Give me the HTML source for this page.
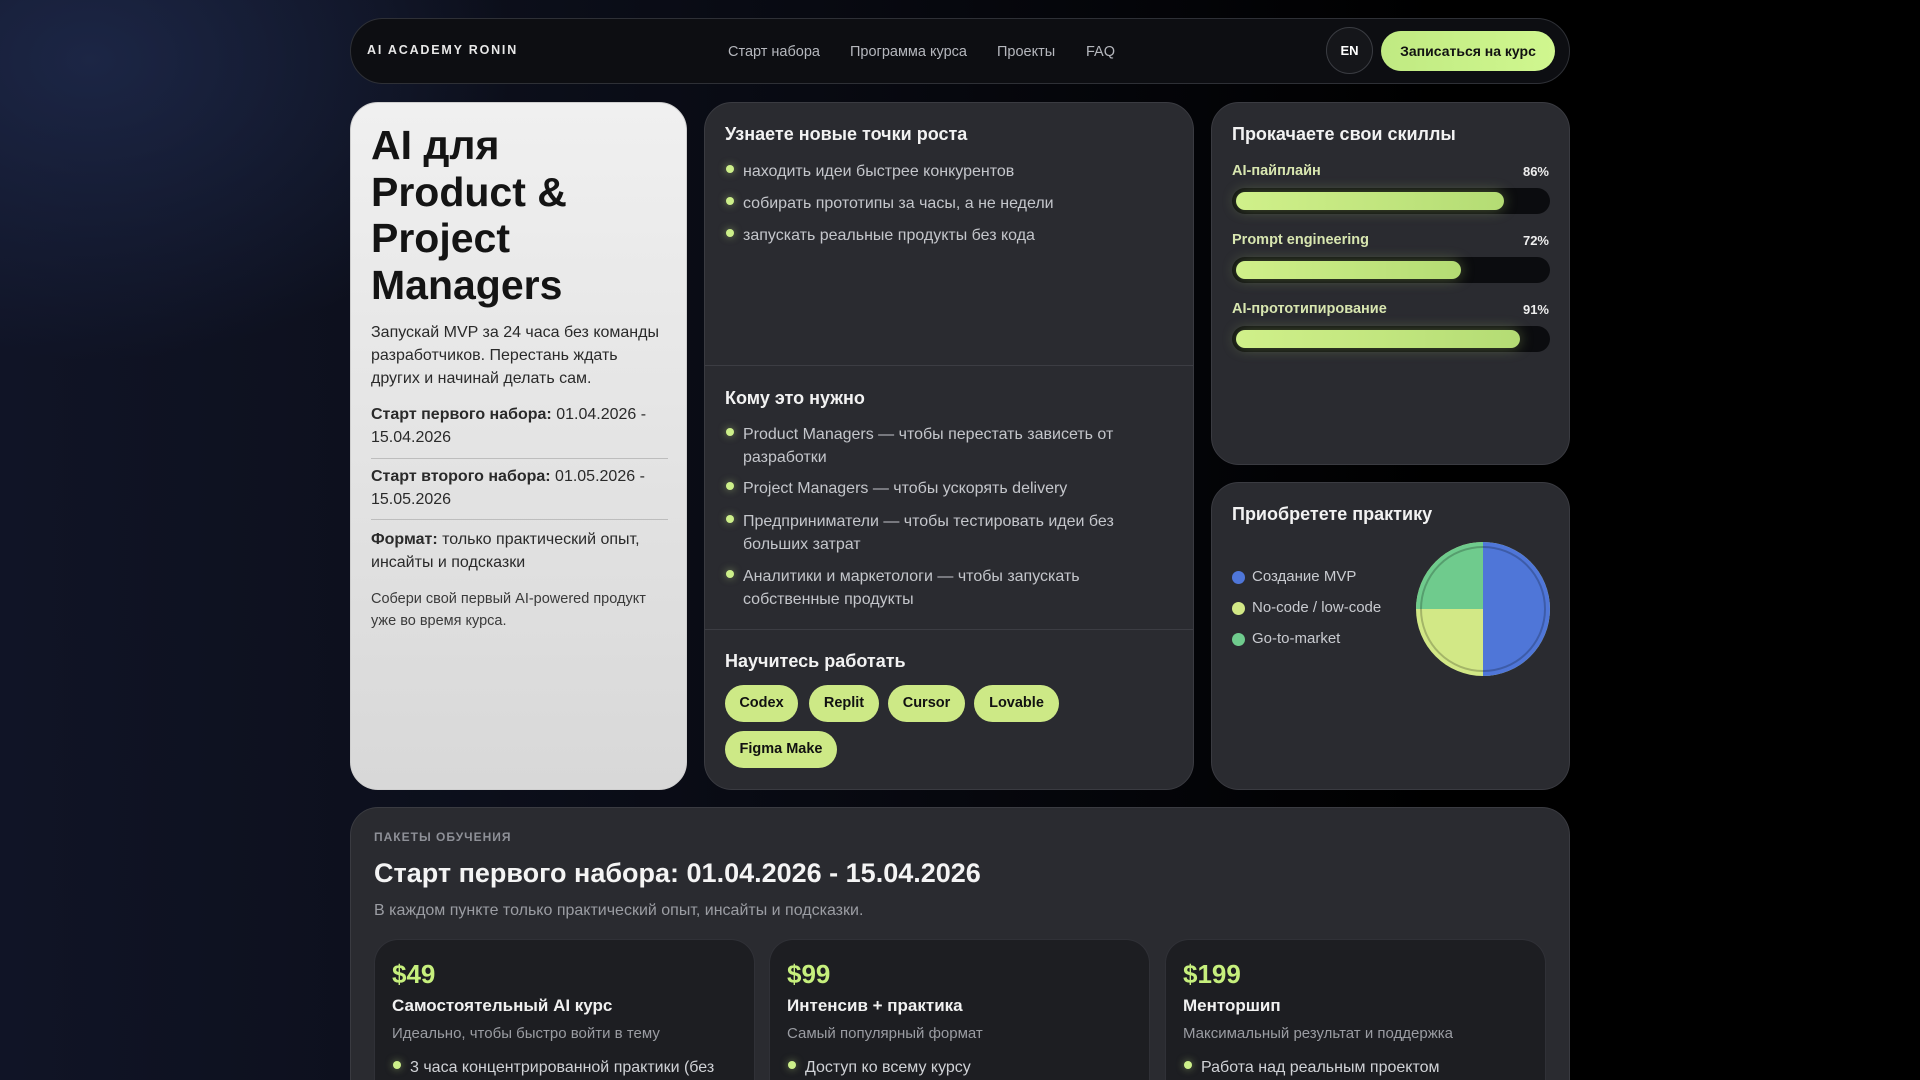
<!DOCTYPE html>
<html><head><meta charset="utf-8">
<style>
*{box-sizing:border-box;margin:0;padding:0}
html,body{width:1920px;height:1080px;overflow:hidden}
body{font-family:"Liberation Sans",sans-serif;position:relative;
background:radial-gradient(ellipse 420px 300px at 90px 60px,rgba(32,44,80,.75),rgba(32,44,80,0) 100%),linear-gradient(90deg,#101426 0%,#0c0f1b 25%,#05060b 55%,#000 75%,#000 100%);}
.abs{position:absolute}
.nav{left:350px;top:18px;width:1220px;height:66px;border-radius:33px;background:#0d0e12;border:1px solid #2e3036}
.logo{left:16px;top:24px;color:#e8e8e8;font-size:12.5px;font-weight:bold;letter-spacing:1.8px}
.nl{top:25px;color:#b5b7bd;font-size:14.5px}
.en{left:975px;top:8px;width:47px;height:47px;border-radius:50%;border:1px solid #3a3c42;background:#15161a;color:#fff;font-size:13px;font-weight:bold;text-align:center;line-height:45px}
.cta{left:1030px;top:12px;width:174px;height:40px;border-radius:20px;background:linear-gradient(90deg,#c0ea82,#d0f78f);color:#111;font-size:14px;font-weight:bold;text-align:center;line-height:40px}
.card{border-radius:28px;background:#2a2b30;border:1px solid #3a3b41;overflow:hidden}
.lcard{left:350px;top:102px;width:337px;height:688px;border-radius:28px;background:linear-gradient(180deg,#f0f0f0,#d8d8d8);border:1px solid #cfcfcf;color:#1b1b1b}
.lcard .p{position:absolute;left:20px;width:292px}
h1{font-size:41px;line-height:46.5px;font-weight:bold;color:#141414}
.t16{font-size:16px;line-height:23px;color:#2a2a2a}
.hr{position:absolute;left:20px;width:297px;height:1px;background:#bdbdbd}
h3{position:absolute;left:20px;font-size:18px;font-weight:bold;color:#f2f2f2}
.li{position:absolute;left:38px;font-size:16px;line-height:23px;color:#c4c6cb;width:400px}
.li:before{content:"";position:absolute;left:-17px;top:5px;width:8px;height:8px;border-radius:50%;background:#cdf08a;box-shadow:0 0 8px rgba(205,240,138,.5)}
.div{position:absolute;left:0;width:100%;height:1px;background:#3c3d43}
.chip{position:absolute;height:37px;border-radius:19px;background:#cde986;color:#111;font-size:14.5px;font-weight:bold;line-height:37px;text-align:center}
.lab{position:absolute;left:20px;font-size:14.5px;font-weight:bold;color:#d8e6b0}
.pct{position:absolute;right:20px;font-size:13px;font-weight:bold;color:#eee}
.bar{position:absolute;left:20px;width:318px;height:26px;border-radius:13px;background:#0b0c0f}
.bar i{position:absolute;left:4px;top:4px;height:18px;border-radius:9px;background:linear-gradient(90deg,#d0f08a,#b4dc74);box-shadow:0 0 14px rgba(200,235,130,.35)}
.leg{position:absolute;left:40px;font-size:15px;color:#c9cbd0}
.leg:before{content:"";position:absolute;left:-20px;top:3px;width:13px;height:13px;border-radius:50%;background:var(--c)}
.pk{position:absolute;top:131px;width:381px;height:150px;border-radius:24px 24px 0 0;background:#1d1e22;border:1px solid #303137;border-bottom:none}
.pk .pr{position:absolute;left:17px;top:19px;font-size:26px;font-weight:bold;color:#c6ef7d}
.pk .tt{position:absolute;left:17px;top:56px;font-size:17px;font-weight:bold;color:#f1f1f1}
.pk .ds{position:absolute;left:17px;top:85px;font-size:15px;color:#9a9ca2}
.pk .li{left:35px;top:116px;color:#d0d2d6}
</style></head><body>
<div class="abs nav">
 <div class="abs logo">AI ACADEMY RONIN</div>
 <div class="abs nl" style="left:377px">Старт набора</div>
 <div class="abs nl" style="left:499px">Программа курса</div>
 <div class="abs nl" style="left:646px">Проекты</div>
 <div class="abs nl" style="left:735px">FAQ</div>
 <div class="abs en">EN</div>
 <div class="abs cta">Записаться на курс</div>
</div>

<div class="abs lcard">
 <div class="p" style="top:19px"><h1>AI для<br>Product &amp;<br>Project<br>Managers</h1></div>
 <div class="p t16" style="top:218px">Запускай MVP за 24 часа без команды разработчиков. Перестань ждать других и начинай делать сам.</div>
 <div class="p t16" style="top:300px"><b>Старт первого набора:</b> 01.04.2026 - 15.04.2026</div>
 <div class="hr" style="top:355px"></div>
 <div class="p t16" style="top:362px"><b>Старт второго набора:</b> 01.05.2026 - 15.05.2026</div>
 <div class="hr" style="top:416px"></div>
 <div class="p t16" style="top:425px"><b>Формат:</b> только практический опыт, инсайты и подсказки</div>
 <div class="p" style="top:485px;font-size:14.5px;line-height:22px;color:#3a3a3a">Собери свой первый AI-powered продукт уже во время курса.</div>
</div>

<div class="abs card" style="left:704px;top:102px;width:490px;height:688px">
 <h3 style="top:21px">Узнаете новые точки роста</h3>
 <div class="li" style="top:57px">находить идеи быстрее конкурентов</div>
 <div class="li" style="top:89px">собирать прототипы за часы, а не недели</div>
 <div class="li" style="top:121px">запускать реальные продукты без кода</div>
 <div class="div" style="top:262px"></div>
 <h3 style="top:285px">Кому это нужно</h3>
 <div class="li" style="top:320px">Product Managers — чтобы перестать зависеть от разработки</div>
 <div class="li" style="top:374px">Project Managers — чтобы ускорять delivery</div>
 <div class="li" style="top:407px">Предприниматели — чтобы тестировать идеи без больших затрат</div>
 <div class="li" style="top:462px">Аналитики и маркетологи — чтобы запускать собственные продукты</div>
 <div class="div" style="top:526px"></div>
 <h3 style="top:548px">Научитесь работать</h3>
 <div class="chip" style="left:20px;top:582px;width:73px">Codex</div>
 <div class="chip" style="left:104px;top:582px;width:70px">Replit</div>
 <div class="chip" style="left:183px;top:582px;width:77px">Cursor</div>
 <div class="chip" style="left:269px;top:582px;width:85px">Lovable</div>
 <div class="chip" style="left:20px;top:628px;width:112px">Figma Make</div>
</div>

<div class="abs card" style="left:1211px;top:102px;width:359px;height:363px">
 <h3 style="top:21px">Прокачаете свои скиллы</h3>
 <div class="lab" style="top:60px">AI-пайплайн</div><div class="pct" style="top:61px">86%</div>
 <div class="bar" style="top:85px"><i style="width:268px"></i></div>
 <div class="lab" style="top:129px">Prompt engineering</div><div class="pct" style="top:130px">72%</div>
 <div class="bar" style="top:154px"><i style="width:225px"></i></div>
 <div class="lab" style="top:198px">AI-прототипирование</div><div class="pct" style="top:199px">91%</div>
 <div class="bar" style="top:223px"><i style="width:284px"></i></div>
</div>

<div class="abs card" style="left:1211px;top:482px;width:359px;height:308px">
 <h3 style="top:21px">Приобретете практику</h3>
 <div class="leg" style="--c:#4f76d8;top:85px">Создание MVP</div>
 <div class="leg" style="--c:#d2e886;top:116px">No-code / low-code</div>
 <div class="leg" style="--c:#6fcb8d;top:147px">Go-to-market</div>
 <svg class="abs" style="left:203px;top:58px" width="136" height="136" viewBox="-68 -68 136 136">
  <circle r="67" fill="#d2e886"/>
  <path d="M0 0V-67A67 67 0 0 1 0 67Z" fill="#4f76d8"/>
  <path d="M0 0H-67A67 67 0 0 1 0 -67Z" fill="#6fcb8d"/>
  <circle r="62" fill="none" stroke="rgba(0,0,0,.22)" stroke-width="2"/>
 </svg>
</div>

<div class="abs card" style="left:350px;top:807px;width:1220px;height:273px;border-radius:28px 28px 0 0;border-bottom:none">
 <div class="abs" style="left:23px;top:22px;font-size:12px;font-weight:bold;letter-spacing:1px;color:#8e9097">ПАКЕТЫ ОБУЧЕНИЯ</div>
 <div class="abs" style="left:23px;top:50px;font-size:27px;font-weight:bold;color:#f4f4f4">Старт первого набора: 01.04.2026 - 15.04.2026</div>
 <div class="abs" style="left:23px;top:94px;font-size:16px;color:#9b9da3">В каждом пункте только практический опыт, инсайты и подсказки.</div>
 <div class="pk" style="left:23px"><div class="pr">$49</div><div class="tt">Самостоятельный AI курс</div><div class="ds">Идеально, чтобы быстро войти в тему</div><div class="li">3 часа концентрированной практики (без</div></div>
 <div class="pk" style="left:418px"><div class="pr">$99</div><div class="tt">Интенсив + практика</div><div class="ds">Самый популярный формат</div><div class="li">Доступ ко всему курсу</div></div>
 <div class="pk" style="left:814px"><div class="pr">$199</div><div class="tt">Менторшип</div><div class="ds">Максимальный результат и поддержка</div><div class="li">Работа над реальным проектом</div></div>
</div>
</body></html>
